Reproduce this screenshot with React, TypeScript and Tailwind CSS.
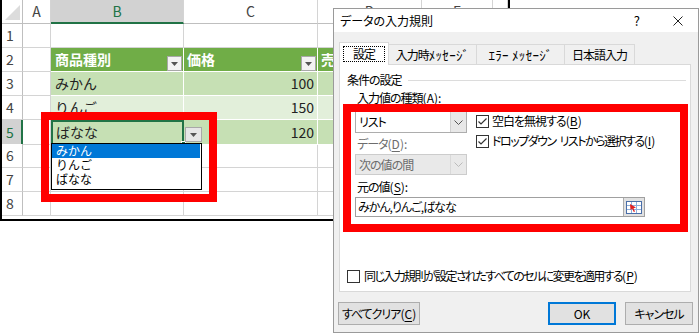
import React from 'react';

const JP = "font-['Noto_Sans_CJK_JP','Noto_Sans',sans-serif]";
const GRID = 'grid grid-cols-[21px_28px_133px_134px_104px_71px_15px]';

type Row = { n: number; header?: boolean; b?: string; c?: string; fill?: string; active?: boolean };

const rows: Row[] = [
  { n: 1 },
  { n: 2, header: true },
  { n: 3, b: 'みかん', c: '100', fill: 'bg-[#c6e0b4]' },
  { n: 4, b: 'りんご', c: '150', fill: 'bg-[#e2efda]' },
  { n: 5, b: 'ばなな', c: '120', fill: 'bg-[#c6e0b4]', active: true },
  { n: 6 },
  { n: 7 },
  { n: 8 },
];

// access key like "(A)" with the letter underlined
const Key: React.FC<{ k: string; colon?: boolean }> = ({ k, colon }) => (
  <span className="tracking-normal">
    (<u className="underline-offset-2">{k}</u>){colon ? ':' : ''}
  </span>
);

const FilterButton = () => (
  <div className="w-[15px] h-[15px] shrink-0 self-end bg-[#f3f3f3] border border-[#a8a8a8] flex items-center justify-center">
    <svg width="7" height="4" viewBox="0 0 7 4">
      <path d="M0 0H7L3.5 4Z" fill="#555" />
    </svg>
  </div>
);

const Chevron: React.FC<{ color?: string }> = ({ color = '#555' }) => (
  <svg width="9" height="5" viewBox="0 0 9 5">
    <path d="M0.5 0.5L4.5 4.5L8.5 0.5" fill="none" stroke={color} strokeWidth="1" />
  </svg>
);

const Check: React.FC<{ checked?: boolean }> = ({ checked }) => (
  <span className="w-[13px] h-[13px] shrink-0 border border-[#333] bg-white flex items-center justify-center">
    {checked && (
      <svg width="11" height="11" viewBox="0 0 11 11">
        <path d="M1.5 5.5L4 8L9.5 2.5" fill="none" stroke="#333" strokeWidth="1.2" />
      </svg>
    )}
  </span>
);

const Sheet = () => (
  <div className={`w-[510px] border-l-2 border-r-2 border-b-2 border-black bg-white ${JP}`}>
    {/* column headers */}
    <div className={`${GRID} h-6`}>
      <div className="flex items-end justify-end pr-[2px] pb-[3px] border-r border-b border-[#bfbfbf]">
        <svg width="15" height="15" viewBox="0 0 15 15">
          <path d="M15 0V15H0Z" fill="#dcdcdc" />
        </svg>
      </div>
      {['A', 'B', 'C', 'D', 'E', ''].map((l, i) => (
        <div
          key={i}
          className={`flex items-center justify-center text-[14px] border-r border-[#d4d4d4] ${
            l === 'B'
              ? 'bg-[#d2d2d2] text-[#217346] border-b-2 border-b-[#217346]'
              : 'bg-white text-[#444] border-b border-b-[#bfbfbf]'
          }`}
        >
          {l}
        </div>
      ))}
    </div>

    {rows.map((r) => (
      <div key={r.n} className={`${GRID} h-6`}>
        <div
          className={`flex items-center pl-[4px] text-[14px] border-b border-[#d4d4d4] ${
            r.active
              ? 'bg-[#d2d2d2] text-[#217346] border-r-2 border-r-[#217346]'
              : 'bg-white text-[#444] border-r border-r-[#bfbfbf]'
          }`}
        >
          {r.n}
        </div>
        <div className="border-r border-b border-[#d4d4d4]" />

        {r.header ? (
          <>
            <div className="bg-[#70ad47] text-white font-bold text-[14px] flex items-center justify-between pl-[4px] pr-px border-r border-b border-white">
              <span>商品種別</span>
              <FilterButton />
            </div>
            <div className="bg-[#70ad47] text-white font-bold text-[14px] flex items-center justify-between pl-[3px] pr-px border-r border-b border-white">
              <span>価格</span>
              <FilterButton />
            </div>
            <div className="bg-[#70ad47] text-white font-bold text-[14px] flex items-center pl-[3px] border-r border-b border-white">
              売上
            </div>
          </>
        ) : r.b ? (
          <>
            <div
              className={`${r.fill} text-[14px] text-[#222] flex items-center ${
                r.active ? 'border-2 border-[#217346] pl-[3px]' : 'pl-[4px] border-r border-b border-white'
              }`}
            >
              {r.b}
            </div>
            <div className={`${r.fill} relative text-[14px] text-[#222] flex items-center justify-end pr-[3px] border-r border-b border-white`}>
              {r.c}
              {r.active && (
                <>
                  <div className="absolute left-[-3px] top-[21px] w-[5px] h-[5px] bg-[#217346] border border-white" />
                  <div className="absolute left-[1px] top-[7px] w-[17px] h-[15px] bg-[#e6e6e6] border border-[#a8a8a8] flex items-center justify-center">
                    <svg width="7" height="4" viewBox="0 0 7 4">
                      <path d="M0 0H7L3.5 4Z" fill="#555" />
                    </svg>
                  </div>
                </>
              )}
            </div>
            <div className={`${r.fill} border-r border-b border-white`} />
          </>
        ) : (
          <>
            <div className="border-r border-b border-[#d4d4d4]" />
            <div className="border-r border-b border-[#d4d4d4]" />
            <div className="border-r border-b border-[#d4d4d4]" />
          </>
        )}
        <div className="border-r border-b border-[#d4d4d4]" />
        <div className="border-b border-[#d4d4d4]" />
      </div>
    ))}
    <div className="h-[3px]" />
  </div>
);

const DropList = () => (
  <div className={`absolute left-[51px] top-[143px] w-[151px] h-[47px] bg-white border border-black text-[12px] leading-[14px] ${JP}`}>
    <div className="bg-[#0078d7] text-white pl-[4px] mr-px">みかん</div>
    <div className="pl-[4px] text-black">りんご</div>
    <div className="pl-[4px] text-black">ばなな</div>
  </div>
);

const Dialog = () => (
  <div
    className={`absolute left-[333px] top-[8px] w-[366px] h-[325px] border border-[#9a9a9a] bg-[#f0f0f0] flex flex-col text-[12px] text-black ${JP} [font-feature-settings:'palt']`}
  >
    <div className="h-[23px] shrink-0 bg-white flex items-center pl-[6px] pr-[15px]">
      <span>データの入力規則</span>
      <span className="ml-auto mr-[33px] text-[13px]">?</span>
      <svg width="10" height="10" viewBox="0 0 10 10">
        <path d="M0.5 0.5L9.5 9.5M9.5 0.5L0.5 9.5" stroke="#222" strokeWidth="1" />
      </svg>
    </div>

    <div className="flex-1 flex flex-col pl-[5px] pr-[7px] pt-[10px] tracking-[-1px]">
      {/* tabs */}
      <div className="flex items-end h-[22px] whitespace-nowrap [font-feature-settings:normal]">
        <div className="relative z-10 w-[50px] h-[23px] -mb-px bg-white border border-b-0 border-[#d9d9d9] flex items-center justify-center">
          <span className="w-[42px] h-[16px] border border-dotted border-black flex items-center justify-center">設定</span>
        </div>
        <div className="w-[88px] h-[20px] border-t border-r border-[#d9d9d9] flex items-center justify-center">
          <span>入力時</span>
          <span className="text-[13px] tracking-[0.3px]">ﾒｯｾｰｼﾞ</span>
        </div>
        <div className="w-[88px] h-[20px] border-t border-r border-[#d9d9d9] flex items-center justify-center">
          <span className="text-[13px] tracking-[0.3px]">ｴﾗｰ ﾒｯｾｰｼﾞ</span>
        </div>
        <div className="w-[70px] h-[20px] border-t border-r border-[#d9d9d9] flex items-center justify-center">日本語入力</div>
      </div>

      {/* panel */}
      <div className="h-[228px] bg-white border border-[#d9d9d9] pl-[7px] pr-[4px] pt-[6px] flex flex-col whitespace-nowrap">
        <div className="flex items-center h-[18px]">
          <span>条件の設定</span>
          <div className="flex-1 h-px bg-[#dcdcdc] ml-[6px]" />
        </div>

        <div className="pl-[8px] flex flex-col">
          <div className="h-[18px] flex items-center pl-[2px]">
            入力値の種類<Key k="A" colon />
          </div>
          <div className="flex mt-[4px] gap-[9px]">
            <div className="w-[112px] flex flex-col">
              <div className="h-[22px] border border-[#adadad] bg-white flex">
                <span className="flex-1 flex items-center pl-[3px]">リスト</span>
                <span className="w-[16px] bg-[#e8e8e8] border-l border-[#d0d0d0] flex items-center justify-center">
                  <Chevron />
                </span>
              </div>
              <div className="h-[18px] mt-[2px] flex items-center pl-[2px] text-[#6d6d6d]">
                データ<Key k="D" colon />
              </div>
              <div className="h-[21px] mt-px border border-[#cccccc] bg-[#e9e9e9] flex text-[#6d6d6d]">
                <span className="flex-1 flex items-center pl-[3px]">次の値の間</span>
                <span className="w-[16px] border-l border-[#d9d9d9] flex items-center justify-center">
                  <Chevron color="#bbbbbb" />
                </span>
              </div>
            </div>
            <div className="flex flex-col pt-px gap-[2px]">
              <div className="h-[18px] flex items-center gap-[3px]">
                <Check checked />
                <span>
                  空白を無視する<Key k="B" />
                </span>
              </div>
              <div className="h-[18px] flex items-center gap-[3px]">
                <Check checked />
                <span className="flex items-center">
                  <span className="tracking-[-1.5px]">ドロップダウン</span>
                  <span className="w-[4px]" />
                  <span className="tracking-[-1.5px]">リストから選択する</span>
                  <Key k="I" />
                </span>
              </div>
            </div>
          </div>
          <div className="h-[18px] mt-[3px] flex items-center pl-[2px]">
            元の値<Key k="S" colon />
          </div>
          <div className="w-[290px] h-[20px] mt-px border border-[#a0a0a0] bg-white flex">
            <span className="flex-1 flex items-center pl-[2px]">みかん,りんご,ばなな</span>
            <span className="w-[21px] bg-[#e1e1e1] border-l border-[#adadad] flex items-center justify-center">
              <svg width="16" height="13" viewBox="0 0 16 13">
                <rect x="0.5" y="0.5" width="15" height="12" fill="#fff" stroke="#4a6ea8" />
                <path d="M1 4.5H15M1 8.5H15M5.5 1V12M10.5 1V12" stroke="#8fb0dc" />
                <path d="M4 3L10 6.5L7.5 7.3L9 10.5L7.8 11L6.3 7.8L4.5 9Z" fill="#e02020" />
              </svg>
            </span>
          </div>
        </div>

        <div className="mt-auto mb-[6px] h-[18px] flex items-center gap-[4px]">
          <Check />
          <span>
            <span className="tracking-[-1.6px]">同じ入力規則が設定されたすべてのセルに変更を適用する</span>
            <Key k="P" />
          </span>
        </div>
      </div>

      {/* buttons */}
      <div className="flex mt-[10px] whitespace-nowrap">
        <button className="-ml-px w-[82px] h-[23px] bg-[#e1e1e1] border border-[#adadad] flex items-center justify-center">
          すべてクリア<Key k="C" />
        </button>
        <button className="ml-auto w-[68px] h-[23px] bg-[#e1e1e1] border-2 border-[#0078d7] flex items-center justify-center tracking-normal">
          OK
        </button>
        <button className="ml-[9px] -mr-[2px] w-[68px] h-[23px] bg-[#e1e1e1] border border-[#adadad] flex items-center justify-center">
          キャンセル
        </button>
      </div>
    </div>
  </div>
);

export default function App() {
  return (
    <div className="relative w-[700px] h-[334px] overflow-hidden bg-white">
      <Sheet />
      <DropList />
      <div className="absolute left-[41px] top-[112px] w-[176px] h-[90px] border-8 border-[#ff0000]" />
      <Dialog />
      <div className="absolute left-[343px] top-[104px] w-[345px] h-[128px] border-8 border-[#ff0000]" />
    </div>
  );
}
